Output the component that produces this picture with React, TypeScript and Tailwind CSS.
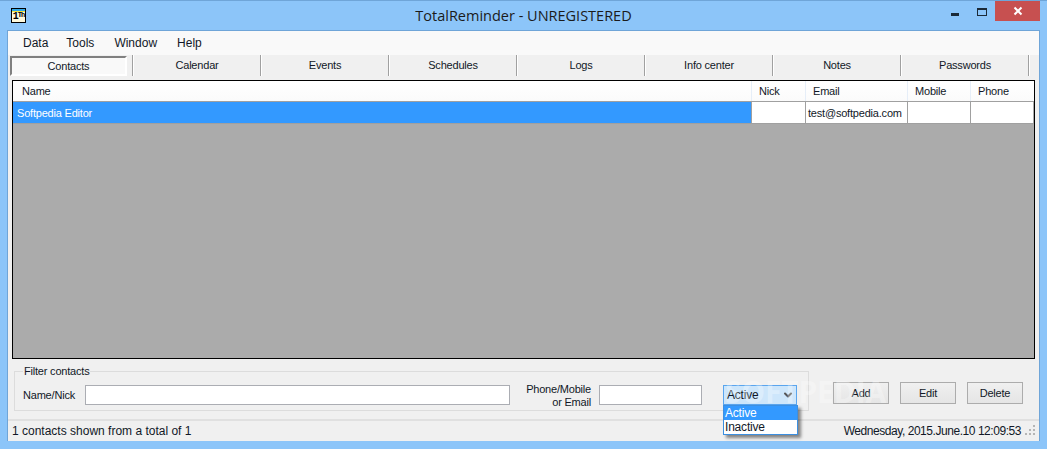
import { ChevronDown } from "lucide-react";

const tabs = ["Calendar", "Events", "Schedules", "Logs", "Info center", "Notes", "Passwords"];

const columns = [
  { label: "Nick", width: "w-[54px]", value: "" },
  { label: "Email", width: "w-[102px]", value: "test@softpedia.com" },
  { label: "Mobile", width: "w-[63px]", value: "" },
  { label: "Phone", width: "w-[63px]", value: "" },
];

function TitleBar() {
  return (
    <div className="flex h-[30px] items-start border-t border-[#6fa5d8]">
      <div className="ml-[11px] mt-[7px] flex h-[15px] w-[15px] flex-col border border-black bg-[#fff9dc]">
        <div className="h-[2px] bg-[#2fa8e8]" />
        <div className="h-[1px] bg-[#f2e23a]" />
        <div className="flex items-start justify-center font-['Liberation_Mono',monospace] font-bold leading-[9px] tracking-[-1px] text-black">
          <span className="text-[10px]">1</span>
          <span className="text-[7px] leading-[7px]">Th</span>
        </div>
      </div>
      <div className="flex-1 pl-[70px] pt-[5px] text-center font-['Open_Sans',sans-serif] text-[14.5px] leading-[19px] tracking-normal text-[#1b1b1b]">
        TotalReminder - UNREGISTERED
      </div>
      <div className="mr-[7px] flex h-[21px] items-start">
        <div className="mr-[18px] mt-[12px] h-[3px] w-[8px] bg-[#1b2a38]" />
        <div className="mr-[8px] mt-[7px] h-[8px] w-[10px] border border-t-2 border-[#1b2a38]" />
        <div className="flex h-[20px] w-[45px] items-center justify-center bg-[#c75050]">
          <svg width="10" height="10" viewBox="0 0 10 10" fill="none" stroke="white" strokeWidth="2">
            <path d="M1.5 1.5 8.5 8.5M8.5 1.5 1.5 8.5" />
          </svg>
        </div>
      </div>
    </div>
  );
}

function TabRow() {
  return (
    <div className="flex h-[25px] bg-[#f0f0f0] pl-[2px]">
      <div className="mt-[1px] flex h-[20px] w-[117px] items-center justify-center border-2 border-b-white border-l-[#808080] border-r-white border-t-[#808080] bg-[#f9f9f9] pt-[1px]">
        Contacts
      </div>
      <div className="ml-[5px] h-[21px] w-[2px] border-l border-r border-l-[#a0a0a0] border-r-white" />
      {tabs.map((tab) => (
        <div key={tab} className="flex h-[21px]">
          <div className="flex w-[126px] items-center justify-center pb-[1px]">{tab}</div>
          <div className="h-[21px] w-[2px] border-l border-r border-l-[#a0a0a0] border-r-white" />
        </div>
      ))}
    </div>
  );
}

function ContactsGrid() {
  return (
    <div className="mx-[4px] flex h-[279px] flex-col border border-black bg-[#ababab]">
      <div className="flex h-[21px] border-b border-b-[#a0a0a0] bg-gradient-to-b from-white to-[#fbfbfb]">
        <div className="flex w-[738px] items-center pl-[9px] pt-[1px]">Name</div>
        {columns.map((col) => (
          <div key={col.label} className={`${col.width} flex items-center border-l border-l-[#e6eef8] pl-[7px] pt-[1px]`}>
            {col.label}
          </div>
        ))}
      </div>
      <div className="flex h-[22px] border-b border-b-[#a0a0a0]">
        <div className="flex w-[738px] items-center bg-[#3399ff] pl-[4px] pt-[1px] text-white">Softpedia Editor</div>
        {columns.map((col) => (
          <div key={col.label} className={`${col.width} flex items-center overflow-hidden whitespace-nowrap border-l border-l-[#a0a0a0] bg-white pl-[2px] pt-[1px]`}>
            {col.value}
          </div>
        ))}
      </div>
    </div>
  );
}

function StatusDropdown() {
  return (
    <div className="relative ml-[21px] h-[20px] w-[74px] text-[12px]">
      <div className="flex h-[20px] items-center justify-between border border-[#5aa5ee] bg-[#cde6fb] pl-[3px] pr-[2px]">
        Active
        <ChevronDown size={12} strokeWidth={4} className="text-[#555]" />
      </div>
      <div className="absolute left-0 top-[20px] z-10 w-[75px] border border-[#3c8fe0] bg-white leading-[14px] shadow-[3px_3px_3px_rgba(0,0,0,0.45)]">
        <div className="bg-[#3399ff] pl-[1px] text-white">Active</div>
        <div className="pl-[1px]">Inactive</div>
      </div>
    </div>
  );
}

function FilterRow() {
  return (
    <div className="relative flex h-[60px] items-start bg-[#f0f0f0]">
      <fieldset className="ml-[6px] mt-[5px] h-[47px] w-[795px] border border-[#dcdcdc] pl-[8px]">
        <legend className="h-[14px] px-[1px] leading-[14px]">Filter contacts</legend>
        <div className="mt-[3px] flex items-center">
          <span className="w-[55px] whitespace-nowrap pt-[1px]">Name/Nick</span>
          <input className="ml-[7px] h-[20px] w-[425px] border border-[#abadb3] bg-white" />
          <div className="ml-[15px] w-[66px] whitespace-nowrap pt-[2px] text-right leading-[13px]">
            Phone/Mobile
            <br />
            or Email
          </div>
          <input className="ml-[8px] h-[20px] w-[103px] border border-[#abadb3] bg-white" />
          <StatusDropdown />
        </div>
      </fieldset>
      <div className="ml-[24px] mt-[23px] flex gap-[11px]">
        {["Add", "Edit", "Delete"].map((label) => (
          <button key={label} className="h-[22px] w-[56px] border border-[#acacac] bg-gradient-to-b from-[#f0f0f0] to-[#e5e5e5]">
            {label}
          </button>
        ))}
      </div>
      <div className="pointer-events-none absolute left-[717px] top-[15px] font-['Open_Sans',sans-serif] text-[30px] font-bold leading-[36px] text-white/30">
        SOFTPEDIA
      </div>
    </div>
  );
}

function StatusBar() {
  return (
    <div className="flex h-[22px] items-center border-t-2 border-t-[#e0e0e0] bg-[#f0f0f0] pl-[4px] pr-[1px]">
      <span className="flex-1 text-[12px] tracking-normal">1 contacts shown from a total of 1</span>
      <span className="text-[12px] tracking-[-0.45px]">Wednesday, 2015.June.10 12:09:53</span>
      <svg width="14" height="14" viewBox="0 0 14 14" className="ml-[3px]" fill="#b5b5b5">
        <rect x="9" y="1" width="2" height="2" />
        <rect x="5" y="5" width="2" height="2" />
        <rect x="9" y="5" width="2" height="2" />
        <rect x="1" y="9" width="2" height="2" />
        <rect x="5" y="9" width="2" height="2" />
        <rect x="9" y="9" width="2" height="2" />
      </svg>
    </div>
  );
}

export default function App() {
  return (
    <div className="h-[449px] w-[1047px] overflow-hidden bg-[#8cc5f9] font-['Liberation_Sans',sans-serif] text-[11px] tracking-[-0.2px] text-[#111827]">
      <TitleBar />
      <div className="ml-[7px] mr-[7px] h-[411px] border border-[#6fa5d8] bg-[#f0f0f0]">
        <div className="flex h-[24px] items-center gap-[20px] bg-[#f9f9f9] pl-[15px] text-[12px] tracking-normal">
          <span className="mr-[-2px]">Data</span>
          <span>Tools</span>
          <span>Window</span>
          <span>Help</span>
        </div>
        <TabRow />
        <ContactsGrid />
        <FilterRow />
        <StatusBar />
      </div>
    </div>
  );
}
